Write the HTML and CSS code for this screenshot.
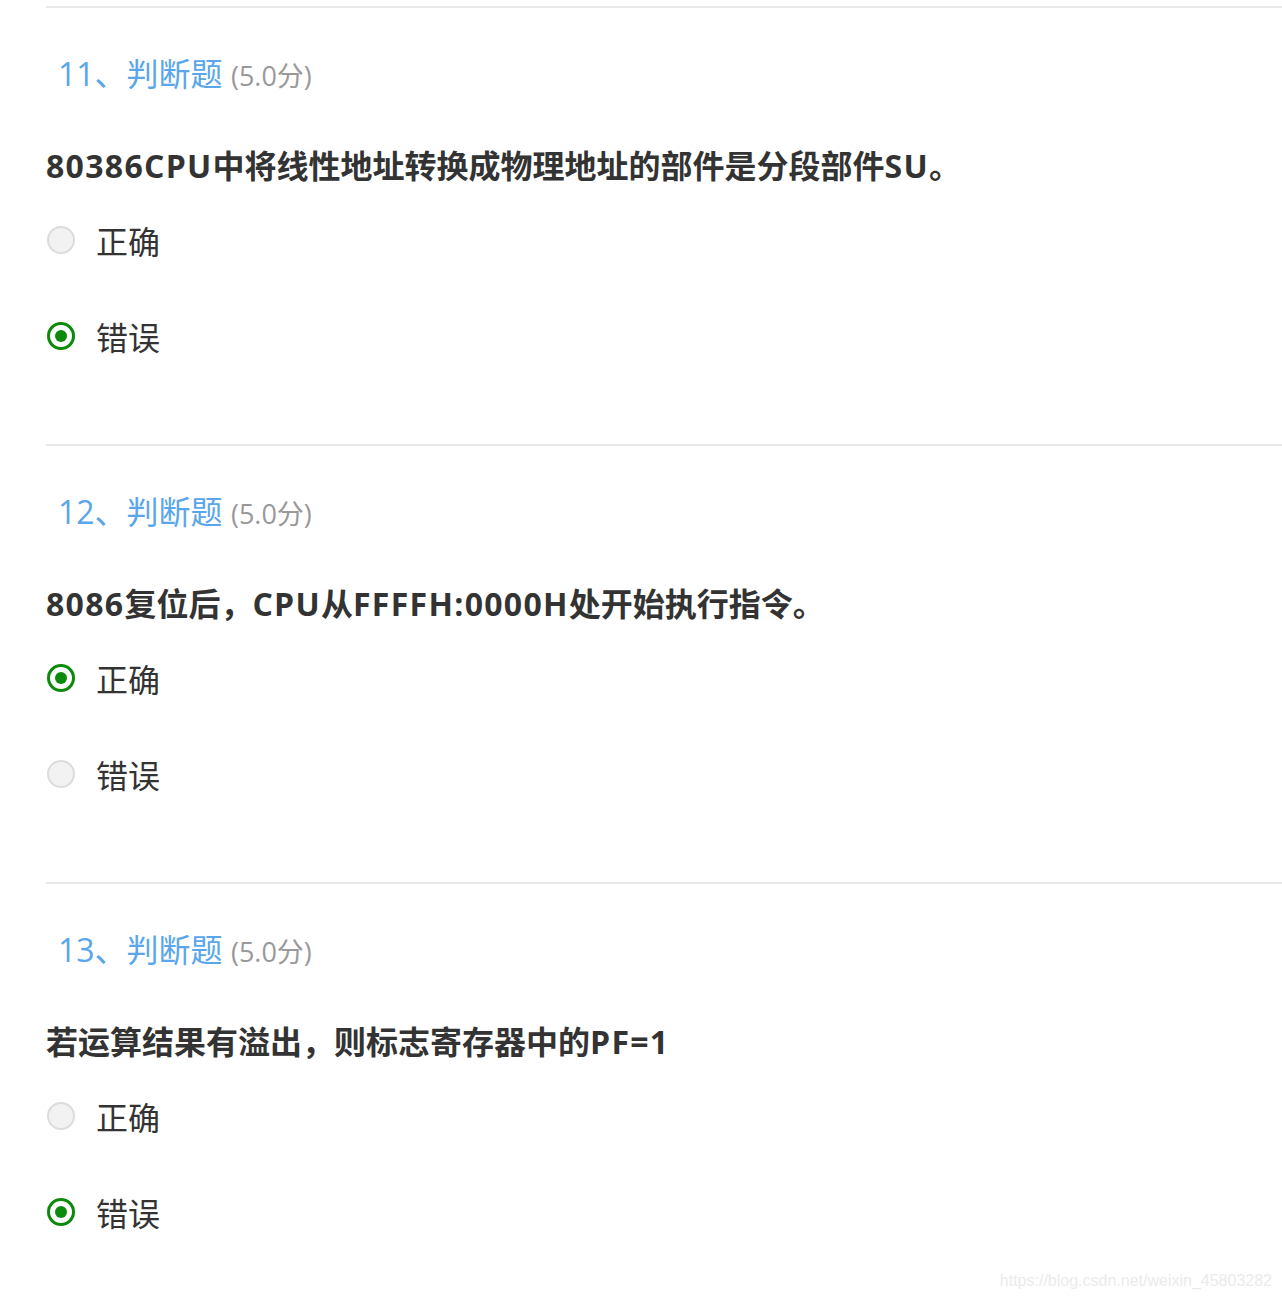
FILE: index.html
```html
<!DOCTYPE html>
<html lang="zh-CN">
<head>
    <meta charset="UTF-8">
    <title>判断题</title>
    <link rel="stylesheet" href="styles.css">
</head>
<body>
    <div class="paper">
        <!-- 11 -->
        <div class="question">
            <div class="title">11、判断题 <span class="score">(5.0分)</span></div>
            <div class="stem"><span class="en">80386CPU</span>中将线性地址转换成物理地址的部件是分段部件<span class="en">SU</span>。</div>
            <div class="option"><span class="radio"></span>正确</div>
            <div class="option"><span class="radio checked"></span>错误</div>
        </div>

        <!-- 12 -->
        <div class="question">
            <div class="title">12、判断题 <span class="score">(5.0分)</span></div>
            <div class="stem"><span class="en">8086</span>复位后，<span class="en">CPU</span>从<span class="en">FFFFH:0000H</span>处开始执行指令。</div>
            <div class="option"><span class="radio checked"></span>正确</div>
            <div class="option"><span class="radio"></span>错误</div>
        </div>

        <!-- 13 -->
        <div class="question">
            <div class="title">13、判断题 <span class="score">(5.0分)</span></div>
            <div class="stem">若运算结果有溢出，则标志寄存器中的<span class="en">PF=1</span></div>
            <div class="option"><span class="radio"></span>正确</div>
            <div class="option"><span class="radio checked"></span>错误</div>
        </div>
    </div>
    <div class="watermark">https://blog.csdn.net/weixin_45803282</div>
</body>
</html>
```

FILE: styles.css
```css
* {
    margin: 0;
    padding: 0;
    box-sizing: border-box;
}

body {
    background: #fff;
    font-family: "Open Sans", "Noto Sans CJK SC", sans-serif;
    color: #333;
    height: 1298px;
    overflow: hidden;
    position: relative;
}

.paper {
    padding-top: 6px;
    padding-left: 46px;
}

.question {
    border-top: 2px solid #e8e8e8;
    padding-top: 46px;
    padding-bottom: 84px;
}

.title {
    padding-left: 12px;
    font-size: 32px;
    line-height: 40px;
    color: #5aa6ea;
}

.score {
    font-size: 27px;
    color: #999;
}

.stem {
    margin-top: 50px;
    font-size: 32px;
    line-height: 40px;
    font-weight: bold;
    color: #333;
}

.stem .en {
    letter-spacing: 1.3px;
}

.option {
    display: flex;
    align-items: center;
    height: 48px;
    margin-top: 48px;
    font-size: 32px;
    color: #333;
}

.stem + .option {
    margin-top: 30px;
}

.radio {
    width: 28px;
    height: 28px;
    border-radius: 50%;
    border: 2px solid #dcdcdc;
    background: #f2f2f2;
    margin-left: 1px;
    margin-right: 21px;
    display: flex;
    align-items: center;
    justify-content: center;
}

.radio.checked {
    border: 3px solid #0b8a0b;
    background: #fff;
}

.radio.checked::after {
    content: "";
    width: 12px;
    height: 12px;
    border-radius: 50%;
    background: #0b8a0b;
}

.watermark {
    position: absolute;
    right: 10px;
    bottom: 8px;
    font-family: "Liberation Sans", Arial, sans-serif;
    font-size: 16px;
    color: #ebebeb;
}
```
